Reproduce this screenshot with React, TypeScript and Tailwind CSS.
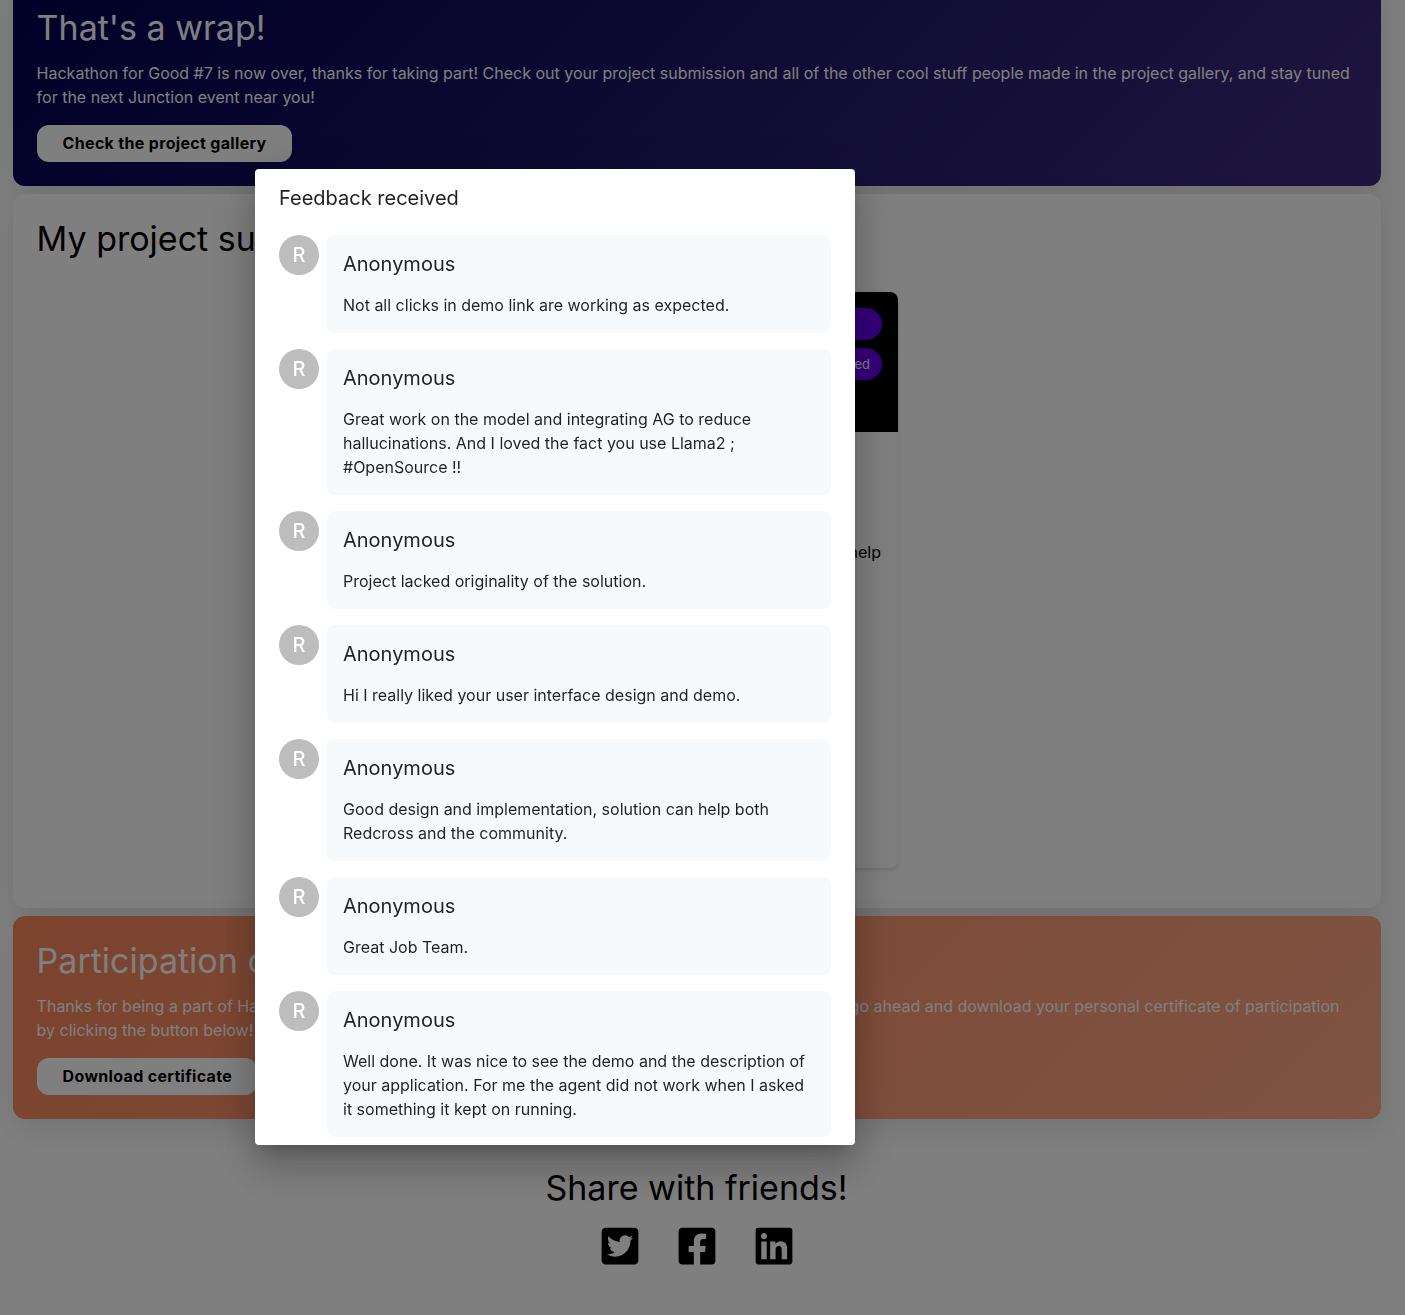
import type { ReactNode } from "react";
import { FaTwitterSquare, FaFacebookSquare, FaLinkedin } from "react-icons/fa";

const feedback = [
  "Not all clicks in demo link are working as expected.",
  "Great work on the model and integrating AG to reduce hallucinations. And I loved the fact you use Llama2 ; #OpenSource !!",
  "Project lacked originality of the solution.",
  "Hi I really liked your user interface design and demo.",
  "Good design and implementation, solution can help both Redcross and the community.",
  "Great Job Team.",
  "Well done. It was nice to see the demo and the description of your application. For me the agent did not work when I asked it something it kept on running.",
];

function Heading({ children }: { children: ReactNode }) {
  return <h2 className="text-[34px] leading-[42px]">{children}</h2>;
}

function Banner({ title, text, action, className }: { title: string; text: string; action: string; className: string }) {
  return (
    <section className={`rounded-xl py-6 pr-6 pl-[23.6px] text-white shadow-[2px_7px_30px_rgba(0,0,0,0.12)] ${className}`}>
      <Heading>{title}</Heading>
      <p className="mt-3 text-base leading-6">{text}</p>
      <button className="mt-4 block h-[37px] rounded-xl bg-white pr-[25px] pb-px pl-[26px] text-base font-bold tracking-[0.02em] text-black">
        {action}
      </button>
    </section>
  );
}

function ProjectCard() {
  return (
    <article className="mx-auto mt-8 h-[576px] w-[402px] overflow-hidden rounded-lg bg-white shadow-[0_2px_4px_rgba(0,0,0,0.14)]">
      <div className="flex h-[140px] flex-col items-end gap-2 bg-black p-4 text-[13px] text-white">
        <span className="h-8 w-24 rounded-full bg-[#6a00f4]" />
        <span className="flex h-8 items-center rounded-full bg-[#6a00f4] px-3 pt-px">Submitted</span>
      </div>
      <p className="mt-[108px] px-[17px] text-right text-base leading-6">help</p>
    </article>
  );
}

function FeedbackItem({ text }: { text: string }) {
  return (
    <li className="flex items-start gap-2">
      <span className="flex size-10 shrink-0 items-center justify-center rounded-full bg-[#bdbdbd] text-xl font-medium text-white">
        R
      </span>
      <div className="flex-1 rounded-lg bg-[#f7fafd] p-4">
        <h3 className="text-xl leading-[26px]">Anonymous</h3>
        <p className="mt-4 text-base leading-6">{text}</p>
      </div>
    </li>
  );
}

export default function App() {
  return (
    <div className="h-[1315px] overflow-hidden bg-white font-['Inter',sans-serif] text-black">
      <main className="-mt-[17px] mr-6 ml-[13px] flex flex-col gap-2">
        <Banner
          title="That's a wrap!"
          text="Hackathon for Good #7 is now over, thanks for taking part! Check out your project submission and all of the other cool stuff people made in the project gallery, and stay tuned for the next Junction event near you!"
          action="Check the project gallery"
          className="bg-linear-[135deg] from-[#00004f] to-[#3d2c80]"
        />
        <section className="h-[714px] rounded-xl bg-white py-6 pr-[23.6px] pl-[23.6px] shadow-[2px_7px_30px_rgba(0,0,0,0.12)]">
          <Heading>My project submissions</Heading>
          <ProjectCard />
        </section>
        <Banner
          title="Participation certificate"
          text="Thanks for being a part of Hackathon for Good #7! Now that the hackathon is officially ended, you can now go ahead and download your personal certificate of participation by clicking the button below!"
          action="Download certificate"
          className="bg-linear-[135deg] from-[#f8865a] to-[#fea886]"
        />
        <section className="mt-10 flex flex-col items-center pr-px">
          <Heading>Share with friends!</Heading>
          <div className="mt-4 flex gap-[35px] text-[42px]">
            <FaTwitterSquare />
            <FaFacebookSquare />
            <FaLinkedin />
          </div>
        </section>
      </main>

      <div className="fixed inset-0 flex items-center bg-black/50 pb-px pl-[255px]">
        <div
          role="dialog"
          className="h-[976px] w-[600px] overflow-hidden rounded bg-white px-6 pt-4 text-black/87 shadow-[0_11px_15px_-7px_rgba(0,0,0,0.2),0_24px_38px_3px_rgba(0,0,0,0.14),0_9px_46px_8px_rgba(0,0,0,0.12)]"
        >
          <h2 className="text-xl leading-[26px]">Feedback received</h2>
          <ul className="mt-6 flex flex-col gap-4">
            {feedback.map((text) => (
              <FeedbackItem key={text} text={text} />
            ))}
          </ul>
        </div>
      </div>
    </div>
  );
}
